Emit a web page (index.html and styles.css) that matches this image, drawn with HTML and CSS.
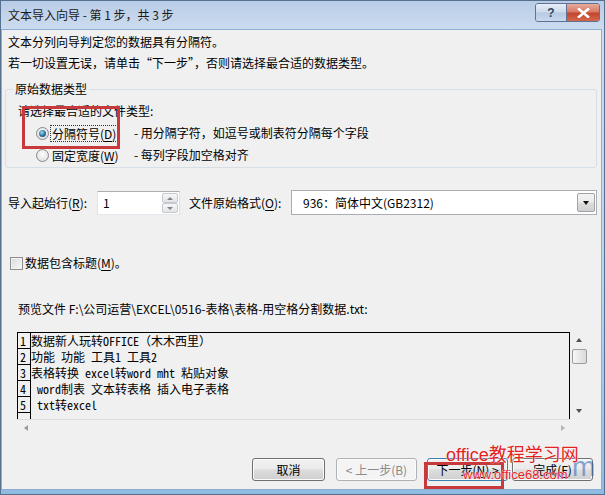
FILE: index.html
```html
<!DOCTYPE html>
<html lang="zh-CN">
<head>
<meta charset="utf-8">
<title>文本导入向导</title>
<link rel="stylesheet" href="styles.css">
</head>
<body>
<div class="window">
  <div class="titlebar">
    <span class="title">文本导入向导 - 第 1 步，共 3 步</span>
    <div class="caption">
      <span class="cap-btn cap-help">?</span>
      <span class="cap-btn cap-close"><svg width="13" height="10" viewBox="0 0 13 10"><path d="M2 1.2 L11 8.8 M11 1.2 L2 8.8" stroke="#fff" stroke-width="2.6" stroke-linecap="square"/></svg></span>
    </div>
  </div>
  <div class="client">
    <p class="intro">文本分列向导判定您的数据具有分隔符。</p>
    <p class="intro intro-2">若一切设置无误，请单击“下一步”，否则请选择最合适的数据类型。</p>
    <fieldset class="group">
      <legend>原始数据类型</legend>
      <div class="group-hint">请选择最合适的文件类型:</div>
      <div class="radio-row">
        <span class="radio checked"></span>
        <span class="radio-cell"><span class="radio-label focus">分隔符号(<u>D</u>)</span></span>
        <span class="radio-desc">- 用分隔字符，如逗号或制表符分隔每个字段</span>
      </div>
      <div class="radio-row">
        <span class="radio"></span>
        <span class="radio-cell"><span class="radio-label">固定宽度(<u>W</u>)</span></span>
        <span class="radio-desc">- 每列字段加空格对齐</span>
      </div>
    </fieldset>
    <div class="start-row">
      <span class="lbl-start">导入起始行(<u>R</u>):</span>
      <div class="spin">
        <span class="spin-val">1</span>
        <div class="spin-btns"><span class="sb sb-up"></span><span class="sb sb-down"></span></div>
      </div>
      <span class="lbl-format">文件原始格式(<u>O</u>):</span>
      <div class="select">
        <span class="select-val">936：简体中文(GB2312)</span>
        <span class="select-btn"></span>
      </div>
    </div>
    <div class="check-row">
      <span class="checkbox"></span>
      <span>数据包含标题(<u>M</u>)。</span>
    </div>
    <div class="preview-label">预览文件 F:\公司运营\EXCEL\0516-表格\表格-用空格分割数据.txt:</div>
    <div class="preview">
      <div class="pv-main">
        <div class="pv-text">
          <div class="pv-row"><span class="pv-num">1</span><span class="pv-line">数据新人玩转OFFICE（木木西里）</span></div>
          <div class="pv-row"><span class="pv-num">2</span><span class="pv-line">功能 功能 工具1 工具2</span></div>
          <div class="pv-row"><span class="pv-num">3</span><span class="pv-line">表格转换 excel转word mht 粘贴对象</span></div>
          <div class="pv-row"><span class="pv-num">4</span><span class="pv-line"> word制表 文本转表格 插入电子表格</span></div>
          <div class="pv-row"><span class="pv-num">5</span><span class="pv-line"> txt转excel</span></div>
          <div class="pv-fill"><span class="pv-num"></span></div>
        </div>
        <div class="vscroll">
          <span class="vs-btn"><span class="tri tri-up"></span></span>
          <span class="thumb"></span>
          <span class="vs-space"></span>
          <span class="vs-btn"><span class="tri tri-down"></span></span>
        </div>
      </div>
      <div class="hscroll">
        <span class="tri tri-left"></span>
        <span class="tri tri-right"></span>
      </div>
    </div>
    <div class="buttons">
      <button class="btn btn-cancel">取消</button>
      <button class="btn btn-back" disabled>&lt; 上一步(B)</button>
      <button class="btn btn-next">下一步(<u>N</u>) &gt;</button>
      <button class="btn btn-finish">完成(<u>F</u>)</button>
    </div>
  </div>
  <div class="annot annot-type"></div>
  <div class="annot annot-next"></div>
  <span class="wm-blue">m</span>
  <div class="watermark">
    <span class="wm-title">office教程学习网</span>
    <span class="wm-url">www.office68.com</span>
  </div>
</div>
</body>
</html>
```

FILE: styles.css
```css
* { box-sizing: border-box; }
html, body { margin: 0; padding: 0; }
body {
  width: 605px;
  height: 495px;
  overflow: hidden;
  font-family: "Noto Sans CJK SC", "Noto Sans", sans-serif;
  font-size: 12px;
  line-height: 16px;
  color: #000;
  background: #fff;
}
u { text-decoration: underline; text-underline-offset: 2px; }

.window {
  position: relative;
  width: 605px;
  height: 495px;
  display: flex;
  flex-direction: column;
  padding: 0 4px 6px 2px;
  background: linear-gradient(to bottom, #b8cce6 0, #cddcef 30px, #b9d2ec 60%, #8fbbe2 100%);
  box-shadow: inset 0 0 0 1px #56708f;
}

.titlebar {
  height: 30px;
  flex: none;
  display: flex;
  align-items: flex-start;
  padding: 0 1px 0 6px;
}
.title { align-self: center; color: #1a1a1a; }
.caption {
  margin-left: auto;
  margin-top: 3px;
  display: flex;
  height: 19px;
  border: 1px solid #5f7390;
  border-radius: 3px;
  overflow: hidden;
}
.cap-btn { height: 100%; display: flex; align-items: center; justify-content: center; }
.cap-help {
  width: 31px;
  border-right: 1px solid #5f7390;
  background: linear-gradient(#e6eef8, #cbd9eb 48%, #b6c9e1 52%, #c9d9ee);
  font: bold 12px/16px "Liberation Sans", sans-serif;
  color: #33455e;
}
.cap-close {
  width: 32px;
  background: linear-gradient(#e9ab9c, #d57963 48%, #c4442e 52%, #d3674c);
}

.client {
  flex: 1;
  background: #f0f0f0;
  padding: 4px 4px 0 3px;
  display: flex;
  flex-direction: column;
  box-shadow: 0 0 0 1px #8eaed3;
}
p { margin: 0; }
.intro { padding-left: 3px; }
.intro-2 { margin-top: 5px; }

.group {
  margin: 10px 0 0;
  padding: 6px 12px 1px;
  border: 1px solid #d5dfe5;
  border-radius: 3px;
  min-width: 0;
}
.group legend { padding: 0 2px; margin-left: -5px; line-height: 16px; }
.group-hint { margin-bottom: 3px; }
.radio-row { display: flex; align-items: center; height: 22px; padding-left: 18px; }
.radio {
  position: relative;
  flex: none;
  width: 13px;
  height: 13px;
  margin-right: 1px;
  border-radius: 50%;
  border: 1px solid #8a8a8a;
  background: radial-gradient(circle at 50% 40%, #fdfdfd, #d8d8d8);
}
.radio.checked::after {
  content: "";
  position: absolute;
  left: 2px;
  top: 2px;
  width: 7px;
  height: 7px;
  border-radius: 50%;
  background: radial-gradient(circle at 40% 35%, #9edcf8, #2a6f9f 55%, #164a73);
}
.radio-cell { width: 84px; flex: none; }
.radio-label { display: inline-block; padding: 0 1px; border: 1px dotted transparent; line-height: 15px; }
.radio-label.focus { border-color: #333; }

.start-row { display: flex; align-items: center; margin-top: 22px; height: 25px; padding-left: 3px; }
.lbl-start { width: 89px; flex: none; }
.spin {
  width: 83px;
  height: 24px;
  flex: none;
  display: flex;
  border: 1px solid;
  border-color: #abadb3 #dbdfe6 #e3e9ef #e2e3ea;
  background: #fff;
}
.spin-val { flex: 1; padding-left: 5px; line-height: 22px; }
.spin-btns { width: 17px; display: flex; flex-direction: column; padding: 1px 1px 1px 0; }
.sb {
  position: relative;
  flex: 1;
  border: 1px solid #c5cad2;
  border-radius: 2px;
  background: linear-gradient(#f7f7f7, #e4e4e4);
}
.sb::after {
  content: "";
  position: absolute;
  left: 4px;
  top: 3px;
  border-left: 3px solid transparent;
  border-right: 3px solid transparent;
}
.sb-up::after { border-bottom: 3px solid #7a8593; }
.sb-down::after { border-top: 3px solid #7a8593; }
.lbl-format { margin-left: 9px; width: 102px; flex: none; }
.select {
  flex: 1;
  height: 25px;
  display: flex;
  align-items: center;
  padding: 0 1px 0 11px;
  border: 1px solid #abadb3;
  background: #fff;
}
.select-btn {
  position: relative;
  margin-left: auto;
  width: 18px;
  height: 19px;
  border: 1px solid #9ea3a8;
  border-radius: 2px;
  background: linear-gradient(#f3f3f3, #ebebeb 48%, #dddddd 52%, #d0d0d0);
}
.select-btn::after {
  content: "";
  position: absolute;
  left: 5px;
  top: 7px;
  border-left: 3.5px solid transparent;
  border-right: 3.5px solid transparent;
  border-top: 4px solid #111;
}

.check-row { display: flex; align-items: center; margin-top: 40px; height: 16px; padding-left: 5px; }
.checkbox {
  width: 13px;
  height: 13px;
  margin-right: 2px;
  border: 1px solid #8f8f8f;
  background: linear-gradient(135deg, #d9d9d9, #fbfbfb);
  box-shadow: inset 0 0 0 1px #f2f2f2;
}

.preview-label { margin-top: 30px; padding-left: 13px; }
.preview { margin-top: 15px; margin-left: 12px; width: 571px; }
.pv-main { display: flex; height: 87px; }
.pv-text {
  width: 553px;
  display: flex;
  flex-direction: column;
  overflow: hidden;
  border: 1px solid #000;
  border-bottom: none;
  font-family: "Noto Sans Mono CJK SC", "Liberation Mono", "Noto Sans CJK SC", monospace;
  font-size: 12px;
  line-height: 16px;
}
.pv-row { display: flex; height: 16px; flex: none; }
.pv-num {
  flex: none;
  width: 13px;
  padding-left: 2px;
  border-right: 1px solid #000;
  border-bottom: 1px solid #000;
  line-height: 16px;
}
.pv-line { white-space: pre; }
.pv-fill { flex: 1; display: flex; }
.pv-fill .pv-num { border-bottom: none; }

.vscroll { width: 18px; display: flex; flex-direction: column; align-items: center; }
.vs-btn { height: 16px; flex: none; display: flex; align-items: center; justify-content: center; }
.thumb {
  width: 15px;
  height: 15px;
  margin-top: 1px;
  flex: none;
  border: 1px solid #9c9c9c;
  border-radius: 2px;
  background: linear-gradient(to right, #f6f6f6, #dadada);
}
.vs-space { flex: 1; }
.tri { width: 0; height: 0; display: block; }
.tri-up { border-left: 3.5px solid transparent; border-right: 3.5px solid transparent; border-bottom: 4px solid #505050; }
.tri-down { border-left: 3.5px solid transparent; border-right: 3.5px solid transparent; border-top: 4px solid #505050; }
.tri-left { border-top: 3.5px solid transparent; border-bottom: 3.5px solid transparent; border-right: 4px solid #9a9a9a; }
.tri-right { border-top: 3.5px solid transparent; border-bottom: 3.5px solid transparent; border-left: 4px solid #b4b4b4; }
.hscroll {
  width: 553px;
  height: 16px;
  display: flex;
  align-items: center;
  justify-content: space-between;
  padding: 0 5px 0 7px;
  border-top: 1px solid #dcdcdc;
}

.buttons { display: flex; justify-content: flex-end; margin-top: 23px; padding-right: 4px; }
.btn {
  height: 23px;
  padding: 0;
  font: inherit;
  line-height: 15px;
  color: #000;
  border: 1px solid #707070;
  border-radius: 3px;
  background: linear-gradient(#f2f2f2, #ebebeb 45%, #dddddd 52%, #cfcfcf);
  box-shadow: inset 0 0 0 1px #fbfbfb;
}
.btn-cancel { width: 73px; }
.btn-back { width: 81px; margin-left: 11px; color: #8a8a8a; border-color: #adb2b5; background: #f4f4f4; }
.btn-next { width: 81px; margin-left: 10px; border-color: #3c7fb1; }
.btn-finish { width: 81px; margin-left: 4px; }

.annot { position: absolute; border: 3px solid #c8393c; pointer-events: none; }
.annot-type { left: 22px; top: 106px; width: 98px; height: 43px; }
.annot-next { left: 424px; top: 462px; width: 80px; height: 27px; }

.watermark {
  position: absolute;
  left: 446px;
  top: 444px;
  color: #e4211d;
  font-family: "Liberation Sans", "Noto Sans CJK SC", sans-serif;
  text-shadow: 0 0 1px #fff, 0 0 1px #fff;
}
.wm-title { display: block; font-size: 18px; line-height: 22px; }
.wm-url { display: block; margin-left: 17px; margin-top: 2px; font-size: 13px; line-height: 14px; }
.wm-blue {
  position: absolute;
  left: 572px;
  top: 452px;
  font: 28px/30px "Liberation Sans", sans-serif;
  color: rgba(40, 100, 180, 0.55);
}
```
